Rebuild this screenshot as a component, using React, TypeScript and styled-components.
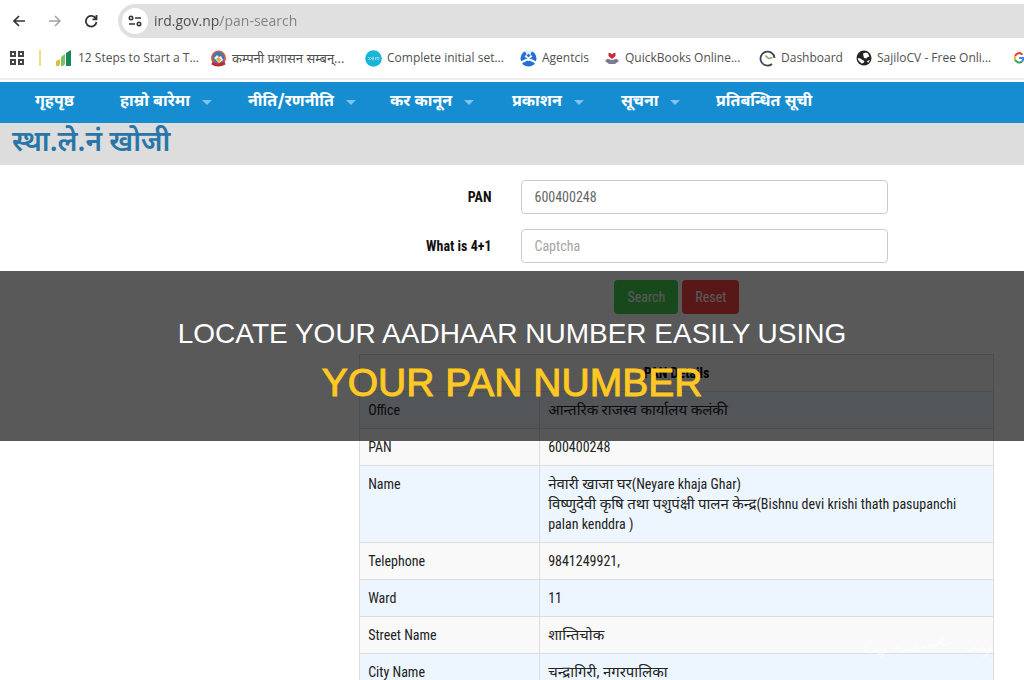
import React from "react";
import styled, { createGlobalStyle } from "styled-components";

const Global = createGlobalStyle`
  * { box-sizing: border-box; }
  html, body { height: 100%; }
  body { margin: 0; background: #fff; overflow: hidden; color: #222; font-family: "Roboto Condensed", "Liberation Sans Narrow", "Noto Sans Devanagari", "Noto Sans", sans-serif; font-size: 14px; line-height: 20px; }
`;

const Page = styled.div`
  position: relative;
  width: 100%;
  min-height: 100vh;
`;

const AddressRow = styled.header`
  display: flex;
  align-items: center;
  height: 42px;
  padding-left: 10px;
`;

const ToolButton = styled.button<{ $faded?: boolean }>`
  display: flex;
  align-items: center;
  justify-content: center;
  width: 18px;
  height: 18px;
  margin-right: 18px;
  padding: 0;
  border: 0;
  background: none;
  color: ${(p) => (p.$faded ? "#a3a3a3" : "#333")};
`;

const AddressBar = styled.div`
  display: flex;
  align-items: center;
  flex: 1;
  height: 34px;
  padding-left: 4px;
  border-radius: 17px 0 0 17px;
  background: #e0e0e0;
`;

const SiteInfo = styled.button`
  display: flex;
  align-items: center;
  justify-content: center;
  width: 26px;
  height: 26px;
  margin-right: 6px;
  padding: 0;
  border: 0;
  border-radius: 50%;
  background: #fff;
`;

/* The host part of the address is darker than the path. */
const Url = styled.input`
  flex: 1;
  border: 0;
  padding: 0;
  background: linear-gradient(to right, #4a4a4a 66px, #808080 66px);
  background-clip: text;
  -webkit-background-clip: text;
  color: transparent;
  font: 14px/20px "Open Sans", sans-serif;
`;

const Bookmarks = styled.nav`
  display: flex;
  align-items: center;
  height: 38px;
  padding: 0 0 4px 9px;
  border-bottom: 2px solid #eee;
  overflow: hidden;
`;

const AppsIcon = styled.svg`
  flex: none;
`;

const Bookmark = styled.a<{ $width: number; $nepali?: boolean }>`
  display: flex;
  align-items: center;
  flex: none;
  gap: 5px;
  width: ${(p) => p.$width}px;
  color: #505050;
  font-family: "Open Sans", "Noto Sans Devanagari", "Noto Sans", sans-serif;
  font-size: ${(p) => (p.$nepali ? 13 : 12)}px;
  line-height: 20px;
  text-decoration: none;
  white-space: nowrap;
  svg { flex: none; }
`;

const Divider = styled.span`
  flex: none;
  width: 2px;
  height: 16px;
  margin: 0 15px 0 14px;
  background: #f3dc84;
`;

const SiteNav = styled.nav`
  display: flex;
  align-items: center;
  height: 41px;
  margin-top: 2px;
  padding-left: 35px;
  background: #168dd0;
`;

const NavLink = styled.a<{ $width: number }>`
  display: flex;
  align-items: center;
  flex: none;
  gap: 12px;
  width: ${(p) => p.$width}px;
  color: #fff;
  font: bold 16px/20px "Noto Sans Devanagari", "Noto Sans", sans-serif;
  text-decoration: none;
  white-space: nowrap;
`;

const Caret = styled.span`
  border: 5px solid transparent;
  border-top-color: #7fc4ec;
  border-bottom: 0;
`;

const Title = styled.h1`
  height: 42px;
  margin: 0;
  padding-left: 12px;
  background: #ddd;
  color: #2875a8;
  font: 600 28px/42px "Noto Sans Devanagari", "Noto Sans", sans-serif;
`;

const Form = styled.form`
  display: flex;
  flex-direction: column;
  gap: 15px;
  padding: 15px 0 40px;
`;

const Field = styled.div`
  display: grid;
  grid-template-columns: 59fr 44fr;
  column-gap: 30px;
  align-items: center;
  padding-right: 136px;
`;

const Label = styled.label`
  color: #111;
  font-weight: bold;
  text-align: right;
`;

const TextBox = styled.input`
  width: 100%;
  height: 34px;
  padding: 0 12px;
  border: 1px solid #ccc;
  border-radius: 4px;
  background: #fff;
  color: #666;
  font: inherit;
  &::placeholder { color: #a5a5a5; opacity: 1; }
`;

const Actions = styled.div`
  display: flex;
  gap: 4px;
  padding: 2px 0 0 60%;
`;

const Button = styled.button<{ $tone: string }>`
  height: 34px;
  padding: 0 13px;
  border: 0;
  border-radius: 4px;
  background: ${(p) => p.$tone};
  color: #fff;
  font: inherit;
`;

const Details = styled.table`
  width: 62%;
  margin: 0 30px 0 auto;
  border-collapse: collapse;
  table-layout: fixed;
`;

const Row = styled.tr`
  background: #f9f9f9;
  &:nth-child(even) { background: #edf6fe; }
`;

const Cell = styled.td`
  padding: 8px;
  border: 1px solid #ddd;
  vertical-align: top;
`;

const KeyCell = styled(Cell).attrs({ as: "th", scope: "row" })`
  font-weight: normal;
  text-align: left;
`;

const HeadCell = styled(Cell).attrs({ as: "th" })`
  color: #000;
  font-weight: bold;
  text-align: center;
`;

const ValueText = styled.div`
  line-height: 20px;
`;

const Nepali = styled.span`
  font-size: 15px;
  line-height: 1;
`;

const Signature = styled.svg`
  position: absolute;
  top: 636px;
  right: 28px;
  opacity: 0.5;
`;

const Banner = styled.section`
  position: absolute;
  top: 271px;
  left: 0;
  right: 0;
  height: 170px;
  padding-top: 43px;
  background: rgba(0, 0, 0, 0.65);
  text-align: center;
  font-family: "Liberation Sans", Arial, sans-serif;
`;

const BannerLine = styled.p`
  margin: 0;
  color: #fff;
  font-size: 28px;
  line-height: 40px;
`;

const BannerAccent = styled.p`
  margin: 0;
  color: #ffc823;
  font-size: 39px;
  line-height: 58px;
  -webkit-text-stroke: 1px #ffc823;
`;

const bookmarkItems = [
  { label: "12 Steps to Start a T...", width: 154, icon: <StepsIcon /> },
  { label: "कम्पनी प्रशासन सम्बन्...", width: 155, nepali: true, icon: <EmblemIcon /> },
  { label: "Complete initial set...", width: 155, icon: <XeroIcon /> },
  { label: "Agentcis", width: 84, icon: <AgentIcon /> },
  { label: "QuickBooks Online...", width: 155, icon: <BooksIcon /> },
  { label: "Dashboard", width: 97, icon: <DashIcon /> },
  { label: "SajiloCV - Free Onli...", width: 157, icon: <GlobeIcon /> },
  { label: "", width: 30, icon: <GoogleIcon /> },
];

const navItems = [
  { label: "गृहपृष्ठ", width: 85 },
  { label: "हाम्रो बारेमा", width: 128, menu: true },
  { label: "नीति/रणनीति", width: 142, menu: true },
  { label: "कर कानून", width: 122, menu: true },
  { label: "प्रकाशन", width: 109, menu: true },
  { label: "सूचना", width: 95, menu: true },
  { label: "प्रतिबन्धित सूची", width: 110 },
];

const details = [
  ["Office", "आन्तरिक राजस्व कार्यालय कलंकी"],
  ["PAN", "600400248"],
  ["Name", "नेवारी खाजा घर(Neyare khaja Ghar)\nविष्णुदेवी कृषि तथा पशुपंक्षी पालन केन्द्र(Bishnu devi krishi thath pasupanchi palan kenddra )"],
  ["Telephone", "9841249921,"],
  ["Ward", "11"],
  ["Street Name", "शान्तिचोक"],
  ["City Name", "चन्द्रागिरी, नगरपालिका"],
];

/* Sets runs of Devanagari one size up from the condensed Latin. */
function MixedText({ text }: { text: string }) {
  const parts = text.split(/([\u0900-\u097f][\u0900-\u097f ,]*)/);
  return (
    <ValueText>
      {parts.map((part, i) => (i % 2 ? <Nepali key={i}>{part}</Nepali> : part))}
    </ValueText>
  );
}

function StepsIcon() {
  return (
    <svg width="17" height="17" viewBox="0 0 17 17">
      <path d="M0 11l4-2v5l-1 2H0z" fill="#e3b844" />
      <path d="M5 7l4-3v10l-2 2H5z" fill="#7cc06a" />
      <path d="M10 3l5-3v16h-5z" fill="#16885a" />
    </svg>
  );
}

function EmblemIcon() {
  return (
    <svg width="17" height="17" viewBox="0 0 17 17">
      <circle cx="8.500" cy="8" r="7.500" fill="#cf5a50" />
      <circle cx="8.500" cy="7.500" r="5.500" fill="#3d78b0" />
      <path d="M4 8l3-3 2 2 2-1 2 4-4 3z" fill="#eef1f2" />
      <path d="M6 9l3-2 2 3-2 2z" fill="#e9a72c" />
      <path d="M2 13q6 4 13 0" stroke="#b82b30" strokeWidth="3" fill="none" />
    </svg>
  );
}

function XeroIcon() {
  return (
    <svg width="17" height="17" viewBox="0 0 17 17">
      <circle cx="8.500" cy="8.500" r="8.300" fill="#18b5d8" />
      <path d="M3.500 7l2 3M5.500 7l-2 3M6.500 8.500h2.500M9 7.500c-3-1.500-3 3 0 2.500M10.500 10V7.500h1" stroke="#8fdcec" fill="none" />
      <circle cx="13" cy="8.500" r="1.200" fill="none" stroke="#8fdcec" />
    </svg>
  );
}

function AgentIcon() {
  return (
    <svg width="17" height="17" viewBox="0 0 17 17">
      <circle cx="8.500" cy="8.500" r="8" fill="#2273cf" />
      <path d="M5 0l2 3M12 0l-2 3M8.500 8v3M8.500 8L5 6M8.500 8L12 6" stroke="#fff" strokeWidth="1.500" />
      <path d="M0 13l5-2.500 3.500-1.500 3.500 1.500 5 2.500" stroke="#fff" strokeWidth="2" fill="none" />
      <path d="M5 0h7l-1.500 4h-4z" fill="#e8f2fc" />
      <circle cx="8.500" cy="5.500" r="2" fill="#2273cf" stroke="#fff" />
    </svg>
  );
}

function BooksIcon() {
  return (
    <svg width="16" height="16" viewBox="0 0 16 16">
      <path d="M1 11l3-2 4 1 4-1 3 2-4 3H5z" fill="#7a7f98" />
      <path d="M2 9l4 1-2 2zM14 9l-4 1 2 2z" fill="#a6556a" />
      <path d="M8 9L4.500 6V3h2L8 4.500 9.500 3h2v3z" fill="#ce2638" />
    </svg>
  );
}

function DashIcon() {
  return (
    <svg width="17" height="17" viewBox="0 0 17 17" fill="none">
      <path d="M13 14A7 7 0 1 1 15.500 8" stroke="#3b4458" strokeWidth="1.800" />
      <path d="M6.500 5.500l3 3 4-1" stroke="#8aa84b" strokeWidth="1.500" />
    </svg>
  );
}

function GlobeIcon() {
  return (
    <svg width="16" height="16" viewBox="0 0 16 16">
      <circle cx="8" cy="8" r="7.500" fill="#222" />
      <path d="M1.500 8l3 .5 2 1.500 2 1-1 2-2 .5-3-3zM7 3.500l3-1 2 1 1.500 3-2 .5-1 1.500-2.500-.5-.5-2zM11 11l3-1-2 3z" fill="#fff" />
    </svg>
  );
}

function GoogleIcon() {
  return (
    <svg width="12" height="12" viewBox="0 0 14 14" fill="none" strokeWidth="2.400">
      <path d="M11 3A5 5 0 0 0 2.500 5" stroke="#e34133" />
      <path d="M2.500 5a5 5 0 0 0 0 4" stroke="#f5b912" />
      <path d="M2.500 9a5 5 0 0 0 8 2" stroke="#34a853" />
      <path d="M10.500 11A5 5 0 0 0 12 7H7" stroke="#4285f4" />
    </svg>
  );
}

export default function App() {
  return (
    <Page>
      <Global />
      <AddressRow>
        <ToolButton aria-label="Back">
          <svg width="14" height="14" viewBox="0 0 14 14" fill="none" stroke="currentColor" strokeWidth="1.700"><path d="M13 7H2M7 2L2 7l5 5" /></svg>
        </ToolButton>
        <ToolButton aria-label="Forward" $faded>
          <svg width="14" height="14" viewBox="0 0 14 14" fill="none" stroke="currentColor" strokeWidth="1.500"><path d="M1 7h11M7 2l5 5-5 5" /></svg>
        </ToolButton>
        <ToolButton aria-label="Reload">
          <svg width="14" height="14" viewBox="0 0 14 14" fill="none" stroke="currentColor" strokeWidth="1.800"><path d="M12.500 8A5.300 5.300 0 1 1 11 3.500L12.500 5M12.500 1v4.300H8.500" /></svg>
        </ToolButton>
        <AddressBar>
          <SiteInfo aria-label="Site information">
            <svg width="14" height="14" viewBox="0 0 14 14" fill="none" stroke="#333" strokeWidth="1.600"><circle cx="3" cy="4" r="1.700" /><path d="M7 4h6M1 10h6" /><circle cx="11" cy="10" r="1.700" /></svg>
          </SiteInfo>
          <Url aria-label="Address" defaultValue="ird.gov.np/pan-search" />
        </AddressBar>
      </AddressRow>
      <Bookmarks>
        <AppsIcon width="16" height="16" viewBox="0 0 16 16" fill="none" stroke="#444" strokeWidth="2"><path d="M2 2h4v4H2zM10 2h4v4h-4zM2 10h4v4H2zM10 10h4v4h-4z" /></AppsIcon>
        <Divider />
        {bookmarkItems.map((b) => (
          <Bookmark key={b.label} href="#" $width={b.width} $nepali={b.nepali} aria-label={b.label || "Google"}>
            {b.icon}
            {b.label}
          </Bookmark>
        ))}
      </Bookmarks>
      <SiteNav>
        {navItems.map((n) => (
          <NavLink key={n.label} href="#" $width={n.width}>
            {n.label}
            {n.menu && <Caret />}
          </NavLink>
        ))}
      </SiteNav>
      <Title>स्था.ले.नं खोजी</Title>
      <Form onSubmit={(e) => e.preventDefault()}>
        <Field>
          <Label htmlFor="pan">PAN</Label>
          <TextBox id="pan" defaultValue="600400248" />
        </Field>
        <Field>
          <Label htmlFor="captcha">What is 4+1</Label>
          <TextBox id="captcha" placeholder="Captcha" />
        </Field>
        <Actions>
          <Button type="submit" $tone="#46d052">Search</Button>
          <Button type="reset" $tone="#fc4545">Reset</Button>
        </Actions>
      </Form>
      <Details>
        <colgroup>
          <col width="180" />
          <col />
        </colgroup>
        <tbody>
          <Row>
            <HeadCell colSpan={2}>PAN Details</HeadCell>
          </Row>
          {details.map(([key, value]) => (
            <Row key={key}>
              <KeyCell>{key}</KeyCell>
              <Cell>
                {value.split("\n").map((line) => (
                  <MixedText key={line} text={line} />
                ))}
              </Cell>
            </Row>
          ))}
        </tbody>
      </Details>
      <Signature width="136" height="24" viewBox="0 0 136 24" fill="none" stroke="#fff" strokeWidth="1.500" aria-hidden="true">
        <path d="M12 6q-10 6-4 10 6 2 10-4-2 8 4 5 4-2 4-5-1 7-6 10M34 14q6-6 6 0 4 4 8-3 2 6 8 0 4 5 8-1 4 5 8-2 6 5 12-9l-3 9q6 2 10-2M106 12q4 6 9-1 2 6 8 0 3 8 8-1-1 8-8 11" />
      </Signature>
      <Banner>
        <BannerLine>LOCATE YOUR AADHAAR NUMBER EASILY USING</BannerLine>
        <BannerAccent>YOUR PAN NUMBER</BannerAccent>
      </Banner>
    </Page>
  );
}
